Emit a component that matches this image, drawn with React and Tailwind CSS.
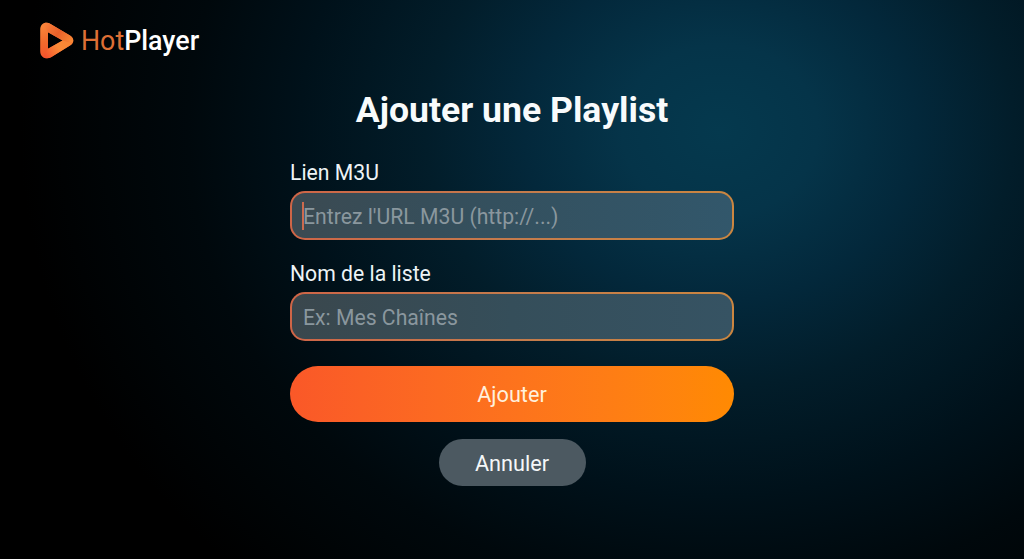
function Logo() {
  return (
    <div className="flex items-center gap-[7px]">
      <svg viewBox="0 0 34 37" className="w-[34px] h-[37px]" fill="none">
        <defs>
          <linearGradient id="logoBase" x1="4" y1="0" x2="14" y2="37" gradientUnits="userSpaceOnUse">
            <stop stopColor="#fb8b3c" />
            <stop offset="0.5" stopColor="#f26a2c" />
            <stop offset="1" stopColor="#f4512c" />
          </linearGradient>
          <linearGradient id="logoTop" x1="5" y1="2" x2="32" y2="20" gradientUnits="userSpaceOnUse">
            <stop stopColor="#f9803a" />
            <stop offset="0.5" stopColor="#e9602a" />
            <stop offset="1" stopColor="#f98a35" />
          </linearGradient>
          <linearGradient id="logoBottom" x1="32" y1="18" x2="6" y2="35" gradientUnits="userSpaceOnUse">
            <stop stopColor="#f98433" />
            <stop offset="0.5" stopColor="#fb8a37" />
            <stop offset="1" stopColor="#f4532d" />
          </linearGradient>
        </defs>
        <path
          fillRule="evenodd"
          fill="url(#logoBase)"
          d="M0.2 7.5C0.2 1.5 5.5 -1 10.5 1.9L30 13.4C34.4 16.1 34.4 20.9 30 23.6L11 35.3C6 38 0.2 35.4 0.2 29ZM8 10.2V26.8L22.6 18.5Z"
        />
        <path fill="url(#logoTop)" d="M3 2.3C5 0.5 8 0.4 10.5 1.9L30 13.4C33.2 15.4 34 18.3 32.7 20.8L22.6 18.5L8 10.2Z" />
        <path fill="url(#logoBottom)" d="M32.7 20.8C32.2 21.9 31.2 22.9 30 23.6L11 35.3C8.2 36.8 5.2 36.7 3 35L8 26.8L22.6 18.5Z" />
      </svg>
      <span className="text-[26.8px] leading-8 text-white">
        <span className="text-[#dd6f35]">Hot</span>
        <span className="font-medium">Player</span>
      </span>
    </div>
  );
}

function Field({ label, placeholder, fill, focused }) {
  return (
    <div>
      <p className="text-[21.2px] leading-7 h-[33px] pt-px text-[#eef4f6]">{label}</p>
      <div className={`h-[49px] rounded-[15px] border-2 border-transparent px-[11px] flex items-center relative ${fill}`}>
        {/* CARET */}
        {focused && <span className="absolute left-[10px] top-[9px] w-[2px] h-[28px] bg-[#cd6a4e]" />}
        <span className="text-[21.2px] leading-7 pt-[2px] text-[#8a979e]">{placeholder}</span>
      </div>
    </div>
  );
}

function App() {
  return (
    <div className="w-[1024px] h-[559px] overflow-hidden font-['Roboto',sans-serif] bg-black bg-[radial-gradient(ellipse_700px_610px_at_720px_130px,#05394e_0%,#053449_14%,#03283b_28%,#021d2a_42%,#00111a_60%,#00080c_76%,#000000_100%)]">

      {/* HEADER */}
      <header className="h-[90px] pl-10 pt-[22px]">
        <Logo />
      </header>

      {/* FORM */}
      <main className="w-[444px] ml-[290px] flex flex-col">
        <h1 className="text-[35.6px] leading-10 font-bold text-center text-[#f8fbfc] whitespace-nowrap">
          Ajouter une Playlist
        </h1>

        <div className="mt-7 flex flex-col gap-[19px]">
          <Field
            label="Lien M3U"
            placeholder="Entrez l'URL M3U (http://...)"
            fill="[background:linear-gradient(90deg,#3b4a52,#34505e_45%,#32576b)_padding-box,linear-gradient(90deg,#cf6547,#c47b4c_50%,#cb8640)_border-box]"
            focused
          />
          <Field
            label="Nom de la liste"
            placeholder="Ex: Mes Chaînes"
            fill="[background:linear-gradient(90deg,#3a474d,#354e5a_50%,#365363)_padding-box,linear-gradient(90deg,#cf6547,#c47b4c_50%,#cb8640)_border-box]"
          />
        </div>

        <button className="mt-[25px] h-14 pt-[2px] rounded-full bg-linear-to-r from-[#fa5828] to-[#ff8a02] text-[21.7px] text-[#fff0dc]">
          Ajouter
        </button>
        <button className="mt-[17px] self-center w-[147px] h-[47px] pt-[3px] rounded-full bg-[#4c5961] text-[21.7px] text-[#f4f7f8]">
          Annuler
        </button>
      </main>
    </div>
  );
}

export default App;
